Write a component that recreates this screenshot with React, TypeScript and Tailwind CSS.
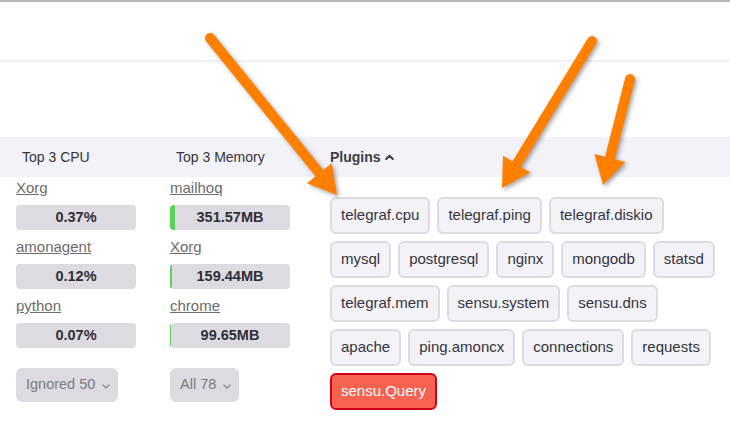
import React from "react";

const font = { fontFamily: '"Liberation Sans", Arial, sans-serif' };

type Item = { name: string; value: string; fill?: number };

const cpu: Item[] = [
  { name: "Xorg", value: "0.37%" },
  { name: "amonagent", value: "0.12%" },
  { name: "python", value: "0.07%" },
];

const mem: Item[] = [
  { name: "mailhoq", value: "351.57MB", fill: 5 },
  { name: "Xorg", value: "159.44MB", fill: 2 },
  { name: "chrome", value: "99.65MB", fill: 1 },
];

const plugins = [
  "telegraf.cpu",
  "telegraf.ping",
  "telegraf.diskio",
  "mysql",
  "postgresql",
  "nginx",
  "mongodb",
  "statsd",
  "telegraf.mem",
  "sensu.system",
  "sensu.dns",
  "apache",
  "ping.amoncx",
  "connections",
  "requests",
];

function Chevron() {
  return (
    <svg width="8" height="5" viewBox="0 0 8 5" className="mt-[2px]">
      <path d="M1 1 L4 4 L7 1" fill="none" stroke="#8a8a8a" strokeWidth="1.3" strokeLinecap="round" strokeLinejoin="round" />
    </svg>
  );
}

function ProcList({ items }: { items: Item[] }) {
  return (
    <div className="flex flex-col pt-[1px]">
      {items.map((it, i) => (
        <div key={i} className={i > 0 ? "mt-[7px]" : ""}>
          <div className="h-5 leading-5 text-[15px] text-[#6b6b6b] underline">{it.name}</div>
          <div className="relative mt-[7px] h-[25px] w-[120px] overflow-hidden rounded-[4px] bg-[#dddbe1] flex items-center justify-center">
            {it.fill ? (
              <div className="absolute left-0 top-0 h-full bg-[#5ad15a]" style={{ width: it.fill }} />
            ) : null}
            <span className="relative text-[14.5px] font-bold text-[#2f2f35]">{it.value}</span>
          </div>
        </div>
      ))}
    </div>
  );
}

function Dropdown({ label }: { label: string }) {
  return (
    <div className="mt-5 self-start inline-flex h-[34px] items-center gap-[7px] rounded-[6px] bg-[#dddbe1] pl-[10px] pr-[8px]">
      <span className="text-[14.5px] text-[#7a7a7e]">{label}</span>
      <Chevron />
    </div>
  );
}

function Arrow({ tail, base, w1, w2, tip }: { tail: [number, number]; base: [number, number]; w1: [number, number]; w2: [number, number]; tip: [number, number] }) {
  return (
    <g>
      <line x1={tail[0]} y1={tail[1]} x2={base[0]} y2={base[1]} stroke="#ff8000" strokeWidth="10" strokeLinecap="round" />
      <polygon points={`${w1[0]},${w1[1]} ${tip[0]},${tip[1]} ${w2[0]},${w2[1]}`} fill="#ff8000" />
    </g>
  );
}

export default function App() {
  return (
    <div className="relative w-[730px] h-[426px] overflow-hidden bg-white" style={font}>
      <div className="border-t-2 border-[#b8b8b8]" />
      <div className="h-[58px]" />
      <div className="h-[2px] bg-[#f1f0f6]" />
      <div className="h-[75px]" />
      <div className="flex h-10 items-center bg-[#f3f2f8] pl-4 text-[14px] text-[#333338]">
        <div className="w-[154px] pl-[6px]">Top 3 CPU</div>
        <div className="w-[160px] pl-[6px]">Top 3 Memory</div>
        <div className="flex flex-1 items-center gap-[4px] font-bold text-[#3d3d44]">
          <span>Plugins</span>
          <svg width="9" height="6" viewBox="0 0 9 6">
            <path d="M1.2 5 L4.5 1.6 L7.8 5" fill="none" stroke="#3d3d44" strokeWidth="2" strokeLinecap="round" strokeLinejoin="round" />
          </svg>
        </div>
      </div>
      <div className="flex pl-4 pr-[10px]">
        <div className="flex w-[154px] flex-col">
          <ProcList items={cpu} />
          <Dropdown label="Ignored 50" />
        </div>
        <div className="flex w-[160px] flex-col">
          <ProcList items={mem} />
          <Dropdown label="All 78" />
        </div>
        <div className="flex flex-1 flex-wrap content-start gap-[7px] pt-5">
          {plugins.map((p) => (
            <div key={p} className="flex h-[37px] items-center rounded-[6px] border-2 border-[#dcdbe2] bg-[#f3f2f8] px-[9px] text-[15px] text-[#34343c]">
              {p}
            </div>
          ))}
          <div className="flex h-[37px] items-center rounded-[6px] border-2 border-[#d0021b] bg-[#f5624f] px-[9px] text-[15px] text-white">
            sensu.Query
          </div>
        </div>
      </div>
      <svg className="pointer-events-none absolute inset-0" width="730" height="426" viewBox="0 0 730 426" style={{ filter: "drop-shadow(2px 2px 2px rgba(0,0,0,0.35))" }}>
        <Arrow tail={[210, 38]} base={[319.4, 173.2]} w1={[307, 183.3]} w2={[331.8, 163.1]} tip={[337, 195]} />
        <Arrow tail={[592, 41]} base={[516.6, 164.1]} w1={[503, 155.7]} w2={[530.2, 172.5]} tip={[502, 188]} />
        <Arrow tail={[630, 79]} base={[609.9, 157.9]} w1={[594.4, 153.9]} w2={[625.4, 161.9]} tip={[603, 185]} />
      </svg>
    </div>
  );
}
